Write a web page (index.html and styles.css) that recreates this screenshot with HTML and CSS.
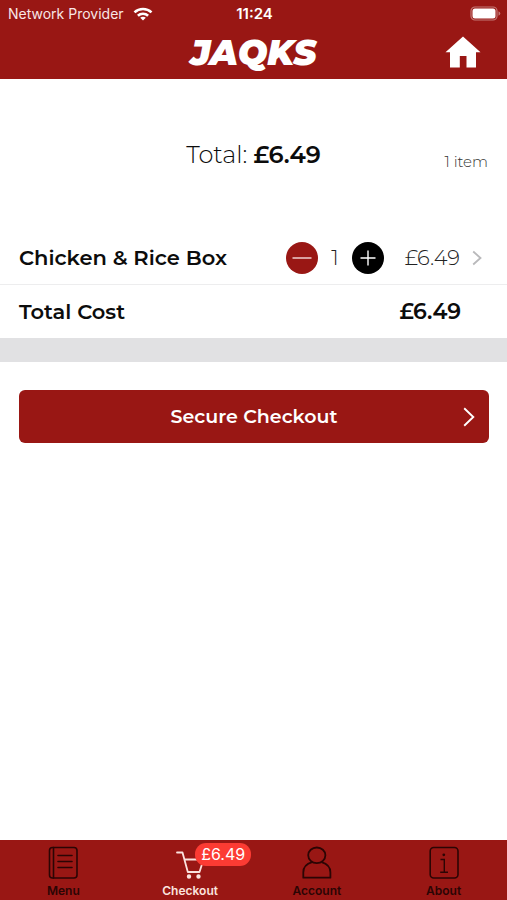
FILE: index.html
```html
<!DOCTYPE html>
<html lang="en-GB">
<head>
<meta charset="utf-8">
<meta name="viewport" content="width=device-width, initial-scale=1">
<title>Jaqks – Checkout</title>
<link rel="stylesheet" href="styles.css">
</head>
<body>
<header class="top">
  <div class="status">
    <div class="carrier">
      <span>Network Provider</span>
      <svg width="20" height="14" viewBox="0 0 20 14" fill="none" stroke="#fff" stroke-width="2.6">
        <path d="M1.500 5.400C6.200 .9 13.800 .9 18.500 5.400"/>
        <path d="M4.900 8.700C7.700 6 12.300 6 15.100 8.700"/>
        <path d="M10 13.500L7.200 10.800C8.800 9.400 11.200 9.400 12.800 10.800Z" fill="#fff" stroke="none"/>
      </svg>
    </div>
    <time class="clock">11:24</time>
    <svg class="battery" width="31" height="15" viewBox="0 0 31 15">
      <rect x="1" y="1" width="26" height="13" rx="4" fill="none" stroke="#c47a77" stroke-width="1.200"/>
      <rect x="2.500" y="2.500" width="23" height="10" rx="2.500" fill="#fff"/>
      <path d="M28.500 5.200Q30.300 6 30.300 7.500T28.500 9.800Z" fill="#c47a77"/>
    </svg>
  </div>
  <div class="nav">
    <h1 class="logo">JAQKS</h1>
    <a class="home" href="#home" aria-label="Home">
      <svg width="36" height="34" viewBox="0 0 36 34" fill="#fff"><path d="M18 .5L35.500 16.300H31V31.500H21.500V20H14.800V31.500H5V16.300H.5Z"/></svg>
    </a>
  </div>
</header>

<main class="basket">
  <section class="summary">
    <p class="summary-total">Total: <strong>£6.49</strong></p>
    <p class="summary-count">1 item</p>
  </section>

  <section class="row">
    <h2 class="row-name">Chicken &amp; Rice Box</h2>
    <div class="stepper">
      <button class="step step-minus" type="button" aria-label="Remove one">
        <svg width="32" height="32" viewBox="0 0 32 32" stroke="#f6dcdb" stroke-width="1.400"><path d="M6.500 16H25.500"/></svg>
      </button>
      <output class="quantity">1</output>
      <button class="step step-plus" type="button" aria-label="Add one">
        <svg width="32" height="32" viewBox="0 0 32 32" stroke="#fff" stroke-width="1.400"><path d="M8.500 16H23.500M16 8.500V23.500"/></svg>
      </button>
    </div>
    <span class="price">£6.49</span>
    <svg class="chevron" width="10" height="16" viewBox="0 0 10 16" fill="none" stroke="#b9b9bb" stroke-width="1.800"><path d="M1.200 1.500L8.500 8L1.200 14.500"/></svg>
  </section>

  <section class="row row-total">
    <h2 class="row-name">Total Cost</h2>
    <strong class="price price-total">£6.49</strong>
  </section>

  <div class="band"></div>

  <div class="action">
    <button class="checkout" type="button">
      <span>Secure Checkout</span>
      <svg width="12" height="20" viewBox="0 0 12 20" fill="none" stroke="#fff" stroke-width="1.900"><path d="M1.200 1.200L10.300 10L1.200 18.800"/></svg>
    </button>
  </div>
</main>

<nav class="tabs">
  <a class="tab" href="#menu">
    <svg width="30" height="34" viewBox="0 0 30 34" fill="none" stroke="currentColor" stroke-width="1.600" stroke-linecap="round">
      <rect x="1.500" y="1.500" width="27.500" height="30.500" rx="3"/>
      <path d="M5.500 1.500V32M10 9.500H24M10 15.500H24M10 21.500H24"/>
    </svg>
    <span>Menu</span>
  </a>
  <a class="tab tab-active" href="#checkout">
    <span class="cart">
      <svg width="30" height="34" viewBox="0 0 30 34" fill="none" stroke="currentColor" stroke-width="1.800" stroke-linecap="round" stroke-linejoin="round">
        <path d="M2 6.500H7.500L12.800 26H24.500L28.500 13.500H9.500"/>
        <circle cx="14" cy="30.500" r="1.300" fill="currentColor"/>
        <circle cx="23.500" cy="30.500" r="1.300" fill="currentColor"/>
      </svg>
      <span class="badge">£6.49</span>
    </span>
    <span>Checkout</span>
  </a>
  <a class="tab" href="#account">
    <svg width="30" height="34" viewBox="0 0 30 34" fill="none" stroke="currentColor" stroke-width="1.800" stroke-linejoin="round">
      <ellipse cx="14.800" cy="9.300" rx="8.600" ry="7.800"/>
      <path d="M10 16.200C4.500 17.800 1.300 21.800 1.300 26.500V31.700H28.400V26.500C28.400 21.800 25 17.800 19.600 16.200"/>
    </svg>
    <span>Account</span>
  </a>
  <a class="tab" href="#about">
    <svg width="30" height="34" viewBox="0 0 30 34" fill="none" stroke="currentColor" stroke-width="1.600">
      <rect x="1.200" y="1.500" width="27.800" height="30.500" rx="3.500"/>
      <path d="M11.500 13.500H15.300V26M11.200 26.200H19" stroke-width="1.400"/>
      <circle cx="14.800" cy="8.800" r="1.400" fill="currentColor" stroke="none"/>
    </svg>
    <span>About</span>
  </a>
</nav>
</body>
</html>
```

FILE: styles.css
```css
:root {
  --brand: #991714;
  --edge: 19px;
}

* {
  box-sizing: border-box;
}

body {
  display: flex;
  flex-direction: column;
  min-height: 100vh;
  margin: 0;
  background: #fff;
  color: #0c0c0c;
  font-family: Montserrat, Inter, "Liberation Sans", sans-serif;
}

h1, h2, p {
  margin: 0;
}

svg {
  display: block;
}

button {
  padding: 0;
  border: 0;
  font: inherit;
  cursor: pointer;
}

a {
  color: inherit;
  text-decoration: none;
}

.top {
  background: var(--brand);
  color: #fff;
}

.status {
  display: grid;
  grid-template-columns: 1fr auto 1fr;
  align-items: center;
  height: 27px;
  padding: 0 6px 0 8px;
  font-family: Inter, sans-serif;
  font-size: 15px;
  line-height: 18px;
}

.carrier {
  display: flex;
  align-items: center;
  gap: 9px;
  color: #f8e6e5;
  font-size: 14px;
}

.clock {
  font-weight: 600;
}

.battery {
  justify-self: end;
}

.nav {
  display: grid;
  grid-template-columns: 1fr auto 1fr;
  align-items: center;
  height: 52px;
  padding: 0 26px;
}

.logo {
  grid-column: 2;
  font-size: 35px;
  font-style: italic;
  font-weight: 900;
  line-height: 40px;
}

.home {
  justify-self: end;
}

.basket {
  flex: 1;
}

.summary {
  display: grid;
  grid-template-columns: 1fr auto 1fr;
  align-items: center;
  height: 152px;
  padding: 0 var(--edge);
}

.summary-total {
  grid-column: 2;
  font-size: 24px;
  font-weight: 300;
  line-height: 32px;
}

.summary-total strong {
  font-weight: 600;
}

.summary-count {
  justify-self: end;
  padding-top: 12px;
  color: #333;
  font-size: 15px;
  font-weight: 300;
}

.row {
  display: flex;
  align-items: center;
  height: 54px;
  padding: 0 25px 0 var(--edge);
  border-bottom: 1px solid #ededee;
}

.row-total {
  height: 53px;
  padding-right: 46px;
  border-bottom: 0;
}

.row-name {
  flex: 1;
  font-size: 21px;
  font-weight: 600;
}

.stepper {
  display: flex;
  align-items: center;
}

.step {
  width: 32px;
  height: 32px;
  border-radius: 50%;
}

.step-minus {
  background: var(--brand);
}

.step-plus {
  background: #000;
}

.quantity {
  width: 34px;
  color: #222;
  font-size: 21px;
  font-weight: 300;
  text-align: center;
}

.price {
  width: 76px;
  color: #222;
  font-size: 21px;
  font-weight: 300;
  text-align: right;
}

.price-total {
  color: #0c0c0c;
  font-size: 22px;
  font-weight: 600;
}

.chevron {
  margin-left: 12px;
}

.band {
  height: 24px;
  background: #e1e1e3;
}

.action {
  padding: 28px 18px 28px var(--edge);
}

.checkout {
  display: grid;
  grid-template-columns: 1fr auto 1fr;
  align-items: center;
  width: 100%;
  height: 53px;
  padding: 0 14px;
  border-radius: 6px;
  background: var(--brand);
  color: #fff;
  font-size: 19px;
  font-weight: 600;
}

.checkout span {
  grid-column: 2;
}

.checkout svg {
  justify-self: end;
}

.tabs {
  display: grid;
  grid-template-columns: repeat(4, 1fr);
  height: 60px;
  padding-top: 6px;
  background: var(--brand);
  color: #2b0504;
  font-family: Inter, sans-serif;
  font-size: 12px;
  font-weight: 600;
  line-height: 16px;
}

.tab {
  display: flex;
  flex-direction: column;
  align-items: center;
  gap: 3px;
}

.tab-active {
  color: #fbe3df;
}

.cart {
  position: relative;
}

.badge {
  position: absolute;
  top: -3px;
  left: 20px;
  padding: 0 6px;
  border-radius: 11px;
  background: #fc3b33;
  color: #fff;
  font-size: 16px;
  font-weight: 400;
  line-height: 23px;
}
```
